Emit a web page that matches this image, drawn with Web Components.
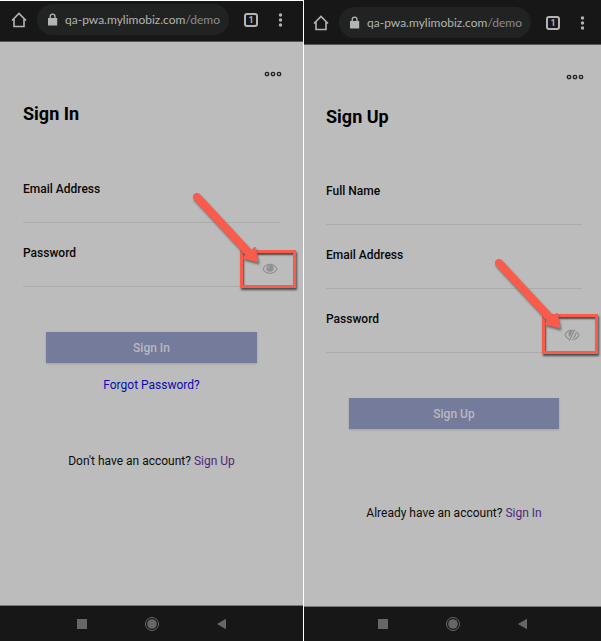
<!DOCTYPE html>
<html lang="en">
<head>
<meta charset="utf-8">
<meta name="viewport" content="width=device-width, initial-scale=1">
<title>Sign In / Sign Up</title>
<style>
body {
  margin: 0;
  background: #ffffff;
  color: #0c0c0c;
  font: 12px/20px Roboto, sans-serif;
}
#compare {
  display: grid;
  grid-template-columns: 303fr 297fr;
  column-gap: 1px;
  min-height: 100vh;
}
#signIn {
  --start: 23px;
  --end: 23px;
  --bar-start: 8px;
  --bar-end: 12px;
  --bar-top: 3px;
  --title-gap: 55px;
  --footer-gap: 56px;
  --nav-height: 35px;
  border-top: 1px solid #ffffff;
}
#signUp {
  --start: 22px;
  --end: 19px;
  --bar-start: 6px;
  --bar-end: 8px;
  --bar-top: 7px;
  --title-gap: 54px;
  --footer-gap: 74px;
  --nav-height: 34px;
  --callout-height: 40px;
}
[slot=footer] a {
  color: #502779;
  text-decoration: none;
}
</style>
</head>
<body>
<main id="compare">
  <phone-screen id="signIn">
    <browser-bar slot="bar" url="qa-pwa.mylimobiz.com" path="/demo"></browser-bar>
    <auth-form heading="Sign In" action="Sign In">
      <text-field label="Email Address" type="email"></text-field>
      <text-field label="Password" type="password" icon="eye"></text-field>
      <a slot="link" href="#forgot">Forgot Password?</a>
      <span slot="footer">Don't have an account? <a href="#signUp">Sign Up</a></span>
    </auth-form>
  </phone-screen>
  <phone-screen id="signUp">
    <browser-bar slot="bar" url="qa-pwa.mylimobiz.com" path="/demo"></browser-bar>
    <auth-form heading="Sign Up" action="Sign Up">
      <text-field label="Full Name" type="text"></text-field>
      <text-field label="Email Address" type="email"></text-field>
      <text-field label="Password" type="password" icon="eye-off"></text-field>
      <span slot="footer">Already have an account? <a href="#signIn">Sign In</a></span>
    </auth-form>
  </phone-screen>
</main>

<script>
(function () {
  function makeTemplate(html) {
    const template = document.createElement("template");
    template.innerHTML = html;
    return template;
  }

  class BaseElement extends HTMLElement {
    constructor() {
      super();
      this.attachShadow({mode: "open"});
      this.shadowRoot.appendChild(this.constructor.template.content.cloneNode(true));
    }

    $(selector) {
      return this.shadowRoot.querySelector(selector);
    }
  }

  /* the phone: browser bar, page, android navigation */
  class PhoneScreen extends BaseElement {}
  PhoneScreen.template = makeTemplate(`
<style>
:host {
  display: flex;
  flex-direction: column;
  min-width: 0;
  background: #bcbcbc;
}
#page {
  flex: 1;
}
nav {
  display: flex;
  justify-content: center;
  align-items: center;
  gap: 48px;
  height: var(--nav-height);
  border-top: 1px solid #777777;
  background: #171717;
}
button {
  display: flex;
  width: 22px;
  padding: 3px;
  border: 0;
  background: none;
  color: #666666;
}
svg {
  flex: none;
  width: 16px;
  height: 16px;
}
</style>
<slot name="bar"></slot>
<div id="page"><slot></slot></div>
<nav>
  <button aria-label="Recent apps"><svg viewBox="0 0 16 16"><path d="M3 3h10v10H3z" fill="currentColor"/></svg></button>
  <button aria-label="Home"><svg viewBox="0 0 16 16"><circle cx="8" cy="8" r="6.5" fill="none" stroke="currentColor"/><circle cx="8" cy="8" r="4.8" fill="currentColor"/></svg></button>
  <button aria-label="Back"><svg viewBox="0 0 16 16"><path d="M3 8l9-5.300v10.600z" fill="currentColor"/></svg></button>
</nav>`);

  class BrowserBar extends BaseElement {
    connectedCallback() {
      this.$("#url").textContent = this.getAttribute("url");
      this.$("#path").textContent = this.getAttribute("path");
    }
  }
  BrowserBar.template = makeTemplate(`
<style>
:host {
  display: flex;
  align-items: center;
  padding: var(--bar-top) var(--bar-end) 6px var(--bar-start);
  border-bottom: 1px solid #555555;
  background: #171717;
  color: #b4b4b4;
}
button {
  display: flex;
  justify-content: center;
  flex: none;
  width: 21px;
  padding: 0;
  border: 0;
  background: none;
  color: inherit;
}
#address {
  display: flex;
  align-items: center;
  flex: 1;
  gap: 7px;
  min-width: 0;
  height: 31px;
  margin: 0 11px 0 8px;
  padding: 0 0 0 10px;
  box-sizing: border-box;
  border-radius: 16px;
  background: #202322;
  font: 12px/20px Lato, sans-serif;
  white-space: nowrap;
}
#path {
  color: #8c8c8c;
}
#tabs {
  width: 14px;
  height: 14px;
  margin: 0 12px 0 4px;
  box-sizing: border-box;
  border: 2px solid currentColor;
  border-radius: 3px;
  font: bold 9px/10px Roboto, sans-serif;
}
svg {
  flex: none;
}
</style>
<button aria-label="Home"><svg width="16" height="16" viewBox="0 0 16 16"><path d="M1 8.500L8 1.500l7 7M3 7v7.500h10V7" fill="none" stroke="currentColor" stroke-width="1.600"/></svg></button>
<div id="address">
  <svg width="11" height="14" viewBox="0 0 11 14"><path d="M1 5h9.200v7.500H1z" fill="currentColor"/><path d="M3.200 6V3.600a2.400 2.400 0 0 1 4.800 0V6" fill="none" stroke="currentColor" stroke-width="1.300"/></svg>
  <span><span id="url"></span><span id="path"></span></span>
</div>
<button id="tabs" aria-label="Tabs">1</button>
<button aria-label="Browser menu"><svg width="5" height="16" viewBox="0 0 5 16" fill="currentColor"><circle cx="2.500" cy="3" r="1.700"/><circle cx="2.500" cy="8" r="1.700"/><circle cx="2.500" cy="13" r="1.700"/></svg></button>`);

  class AuthForm extends BaseElement {
    connectedCallback() {
      this.$("h1").textContent = this.getAttribute("heading");
      this.$("#submit").textContent = this.getAttribute("action");
      this.$("form").addEventListener("submit", e => e.preventDefault());
    }
  }
  AuthForm.template = makeTemplate(`
<style>
:host {
  display: block;
  padding: 20px var(--end) 20px var(--start);
}
#menu {
  display: flex;
  align-items: center;
  height: 24px;
  margin: 0 -2px 16px auto;
  padding: 0;
  border: 0;
  background: none;
  color: #222222;
}
h1 {
  margin: 0 0 var(--title-gap);
  color: #000000;
  font-size: 18px;
  font-weight: 700;
  line-height: 24px;
}
#fields {
  display: grid;
  row-gap: 22px;
}
#submit {
  display: block;
  width: calc(100% - 46px);
  height: 31px;
  margin: 45px auto 0;
  padding: 0;
  border: 0;
  background: #757b9b;
  box-shadow: 0 1px 2px #a0a0a0;
  color: #b9b9bd;
  font: 500 12px/20px Roboto, sans-serif;
}
#link {
  display: flex;
  justify-content: center;
}
#footer {
  margin-top: var(--footer-gap);
  text-align: center;
}
::slotted([slot=link]) {
  margin-top: 12px;
  color: #0d0bb0;
  text-decoration: none;
}
</style>
<button id="menu" aria-label="Menu"><svg width="18" height="6" viewBox="0 0 18 6" fill="none" stroke="currentColor" stroke-width="1.300"><circle cx="3" cy="3" r="1.700"/><circle cx="9" cy="3" r="1.700"/><circle cx="15" cy="3" r="1.700"/></svg></button>
<h1></h1>
<form>
  <div id="fields"><slot></slot></div>
  <button id="submit"></button>
</form>
<div id="link"><slot name="link"></slot></div>
<div id="footer"><slot name="footer"></slot></div>`);

  const icons = {
    "eye": `<path d="M1 6C4-.300 12-.300 15 6 12 11.800 4 11.800 1 6z" fill="none" stroke="currentColor" stroke-width="1.100"/><circle cx="8" cy="5.200" r="3.600" fill="currentColor"/><path d="M6 5a2 2 0 0 1 2-2" fill="none" stroke="#bcbcbc" stroke-width=".8"/>`,
    "eye-off": `<path d="M9 1.700C5.600.800 2.600 2.600 1 6c1 2.200 2.500 3.600 4.300 4.200M11.600 2.400C13 3.200 14.200 4.400 15 6c-1.500 3.100-4 4.600-7 4.500" fill="none" stroke="currentColor" stroke-width="1.200"/><path d="M8.800 1.900C6 1.500 4.300 3.300 4.500 5.600c.1 1.200.6 2 1.400 2.600z" fill="currentColor"/><path d="M10.800.300L5.300 11.800M11.700 4.300c0 2.200-.9 3.700-2.700 4.500" fill="none" stroke="currentColor" stroke-width="1.200"/>`
  };

  class TextField extends BaseElement {
    connectedCallback() {
      const input = this.$("input");
      this.$("label").textContent = this.getAttribute("label");
      input.type = this.getAttribute("type");
      const icon = this.getAttribute("icon");
      if (!icon) {
        this.$("call-out").remove();
        return;
      }
      this.$("svg").innerHTML = icons[icon];
      this.$("button").addEventListener("click", function () {
        input.type = input.type === "password" ? "text" : "password";
      });
    }
  }
  TextField.template = makeTemplate(`
<style>
:host {
  display: block;
}
label {
  display: block;
  color: #080808;
  font-weight: 500;
  line-height: 16px;
}
#row {
  display: flex;
  height: 25px;
  border-bottom: 1px solid #acacac;
}
input {
  flex: 1;
  min-width: 0;
  padding: 0;
  border: 0;
  outline: 0;
  background: none;
  font: inherit;
}
button {
  display: flex;
  padding: 2px;
  border: 0;
  background: none;
  color: #909090;
}
</style>
<label for="input"></label>
<div id="row">
  <input id="input">
  <call-out><button type="button" aria-label="Show password"><svg width="16" height="12" viewBox="0 0 16 12"></svg></button></call-out>
</div>`);

  /* red frame with an arrow, drawn over whatever is slotted */
  class CallOut extends BaseElement {}
  CallOut.template = makeTemplate(`
<style>
:host {
  display: block;
  position: relative;
}
#frame, #arrow {
  position: absolute;
  pointer-events: none;
}
#frame {
  right: -16px;
  bottom: -2px;
  width: 56px;
  height: var(--callout-height, 38px);
  box-sizing: border-box;
  border: 3px solid #fb5b4b;
  box-shadow: 1px 2px 2px #4a4a4a, inset 1px 2px 2px #4a4a4a;
}
#arrow {
  right: 18px;
  bottom: 19px;
  filter: drop-shadow(1px 2px 1px #666666);
}
#content {
  display: flex;
  align-items: flex-end;
  height: 100%;
  padding-bottom: 9px;
  box-sizing: border-box;
}
</style>
<div id="content"><slot></slot></div>
<div id="frame"></div>
<svg id="arrow" width="72" height="78" viewBox="0 0 72 78">
  <path d="M7 8L60 65" stroke="#fb5b4b" stroke-width="8" stroke-linecap="round" fill="none"/>
  <path d="M68 73L53 69l12-11z" fill="#fb5b4b" stroke="#fb5b4b" stroke-linejoin="round"/>
</svg>`);

  customElements.define("call-out", CallOut);
  customElements.define("text-field", TextField);
  customElements.define("auth-form", AuthForm);
  customElements.define("browser-bar", BrowserBar);
  customElements.define("phone-screen", PhoneScreen);
})();
</script>
</body>
</html>
